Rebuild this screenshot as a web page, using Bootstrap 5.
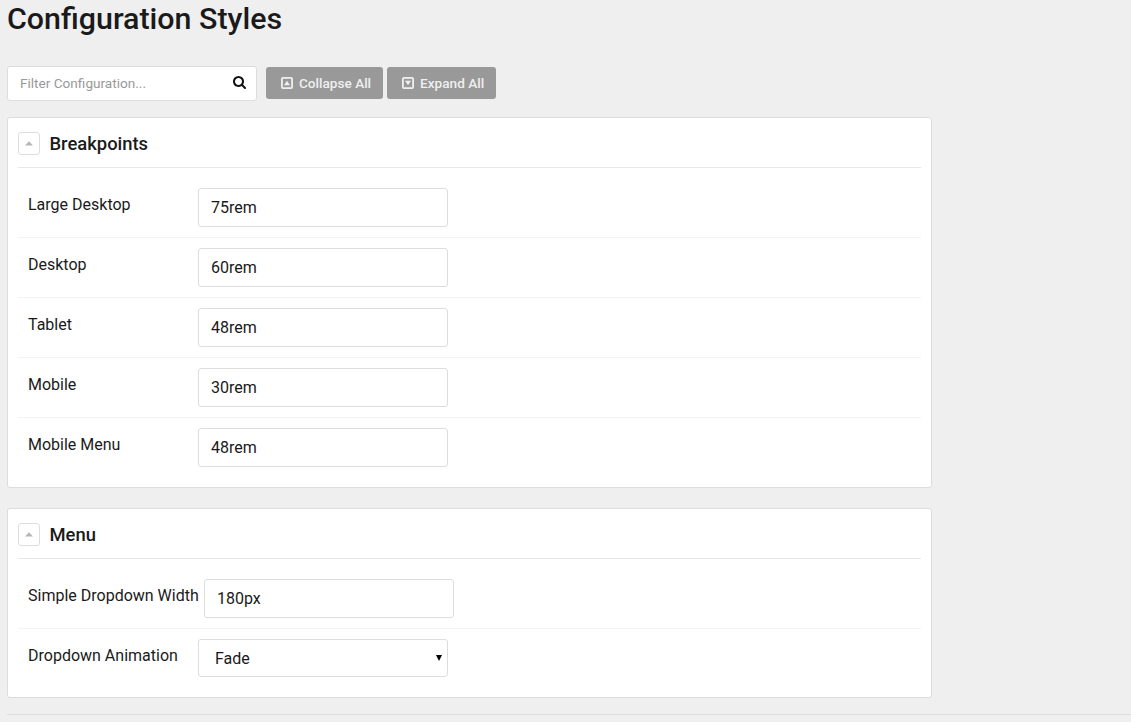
<!DOCTYPE html>
<html lang="en">
<head>
<meta charset="utf-8">
<meta name="viewport" content="width=device-width, initial-scale=1">
<title>Configuration Styles</title>
<link href="https://cdn.jsdelivr.net/npm/bootstrap@5.3.0/dist/css/bootstrap.min.css" rel="stylesheet">
<style>
  body { background: #efefef; color: #1a1a1a; font-family: Roboto, sans-serif; font-size: 16px; line-height: 24px; overflow: hidden; }
  .page { padding-left: 7px; }
  .page-title { font-size: 30.4px; line-height: 38px; font-weight: 500; margin-bottom: 28px; }
  .toolbar { height: 35px; margin-bottom: 16px; }
  .filter { width: 250px; height: 35px; margin-right: 9px; background: #fff; border: 1px solid #ddd; border-radius: 3px; padding: 0 10px 0 12px; }
  .filter .form-control { font-size: 13.6px; line-height: 20px; margin-bottom: 2px; color: #1a1a1a; background: none; }
  .filter .form-control::placeholder { color: #999; opacity: 1; }
  .filter svg { margin: -2px .5px 0 0; }
  .btn-tool { --bs-btn-bg: #999; --bs-btn-color: #efefef; --bs-btn-hover-bg: #888; --bs-btn-hover-color: #fff; height: 32px; font-size: 13.6px; line-height: 20px; font-weight: 500; border: 0; border-radius: 3px; padding: 0 12px 0 15px; gap: 6px; margin: 1px 4px 0 0; }
  .panel { --bs-card-border-color: #ddd; --bs-card-border-radius: 3px; --bs-card-color: #1a1a1a; width: 925px; padding: 0 10px 10px; margin-bottom: 20px; }
  .panel-head { height: 50px; padding-top: 2px; border-bottom: 1px solid #e8e8e8; margin-bottom: 10px; }
  .panel-head h2 { font-size: 18.4px; line-height: 27px; font-weight: 500; }
  .toggle { width: 22px; height: 23px; background: #fff; border: 1px solid #ddd; border-radius: 3px; margin-right: 9.5px; }
  .setting { padding: 10px; border-bottom: 1px solid #f3f3f3; }
  .setting:last-child { border-bottom: 0; }
  .setting label { min-width: 170px; margin-top: 5px; }
  .setting .wide-label { width: 176px; }
  .setting .form-control, .setting .form-select { width: 250px; color: #1a1a1a; border: 1px solid #ddd; border-radius: 3px; }
  .setting .form-control { height: 39px; padding: 0 12px; }
  .setting .form-select { height: 38px; padding: 1px 16px 0; background: #fff url("data:image/svg+xml,%3Csvg xmlns='http://www.w3.org/2000/svg' viewBox='0 0 6 6'%3E%3Cpath d='M0 0h6L3 6z' fill='%23000'/%3E%3C/svg%3E") no-repeat 237px 15px / 6px 6px; }
  .rule { border-top: 1px solid #ddd; margin-top: -4px; }
</style>
</head>
<body>
<main class="page">
  <h1 class="page-title">Configuration Styles</h1>
  <div class="toolbar d-flex align-items-start">
    <div class="filter d-flex align-items-center">
      <input class="form-control border-0 shadow-none p-0" type="text" placeholder="Filter Configuration..." aria-label="Filter Configuration">
      <svg class="flex-shrink-0" width="13" height="13" viewBox="0 128 1664 1664" fill="#111" aria-hidden="true"><path d="M1152 832q0-185-131.5-316.5t-316.5-131.5-316.5 131.5-131.5 316.5 131.5 316.5 316.5 131.5 316.5-131.5 131.5-316.5zm512 832q0 52-38 90t-90 38q-54 0-90-38l-343-342q-179 124-399 124-143 0-273.5-55.5t-225-150-150-225-55.5-273.5 55.5-273.5 150-225 225-150 273.5-55.5 273.5 55.5 225 150 150 225 55.5 273.5q0 220-124 399l343 343q37 37 37 90z"/></svg>
    </div>
    <button class="btn btn-tool d-flex align-items-center" type="button">
      <svg width="12" height="12" viewBox="0 0 12 12" aria-hidden="true"><rect x=".9" y=".9" width="10.2" height="10.2" rx="1" fill="none" stroke="#efefef" stroke-width="1.8"/><path d="M3 8.2h6L6 3.8z" fill="#efefef"/></svg>
      <span>Collapse All</span>
    </button>
    <button class="btn btn-tool d-flex align-items-center" type="button">
      <svg width="12" height="12" viewBox="0 0 12 12" aria-hidden="true"><rect x=".9" y=".9" width="10.2" height="10.2" rx="1" fill="none" stroke="#efefef" stroke-width="1.8"/><path d="M3 3.8h6L6 8.2z" fill="#efefef"/></svg>
      <span>Expand All</span>
    </button>
  </div>

  <section class="card panel">
    <div class="panel-head d-flex align-items-center">
      <button class="toggle p-0 d-flex align-items-center justify-content-center" type="button" aria-label="Collapse"><svg width="8" height="5" viewBox="0 0 8 5"><path d="M0 4.5h8L4 .2z" fill="#b5b5b5"/></svg></button>
      <h2 class="mb-0">Breakpoints</h2>
    </div>
    <div>
      <div class="setting d-flex align-items-start"><label for="bp-large">Large Desktop</label><input class="form-control" id="bp-large" value="75rem"></div>
      <div class="setting d-flex align-items-start"><label for="bp-desktop">Desktop</label><input class="form-control" id="bp-desktop" value="60rem"></div>
      <div class="setting d-flex align-items-start"><label for="bp-tablet">Tablet</label><input class="form-control" id="bp-tablet" value="48rem"></div>
      <div class="setting d-flex align-items-start"><label for="bp-mobile">Mobile</label><input class="form-control" id="bp-mobile" value="30rem"></div>
      <div class="setting d-flex align-items-start"><label for="bp-menu">Mobile Menu</label><input class="form-control" id="bp-menu" value="48rem"></div>
    </div>
  </section>

  <section class="card panel">
    <div class="panel-head d-flex align-items-center">
      <button class="toggle p-0 d-flex align-items-center justify-content-center" type="button" aria-label="Collapse"><svg width="8" height="5" viewBox="0 0 8 5"><path d="M0 4.5h8L4 .2z" fill="#b5b5b5"/></svg></button>
      <h2 class="mb-0">Menu</h2>
    </div>
    <div>
      <div class="setting d-flex align-items-start"><label class="wide-label" for="menu-width">Simple Dropdown Width</label><input class="form-control" id="menu-width" value="180px"></div>
      <div class="setting d-flex align-items-start"><label for="menu-anim">Dropdown Animation</label><select class="form-select" id="menu-anim"><option>Fade</option></select></div>
    </div>
  </section>
  <div class="rule"></div>
</main>
<script src="https://cdn.jsdelivr.net/npm/bootstrap@5.3.0/dist/js/bootstrap.bundle.min.js"></script>
</body>
</html>
